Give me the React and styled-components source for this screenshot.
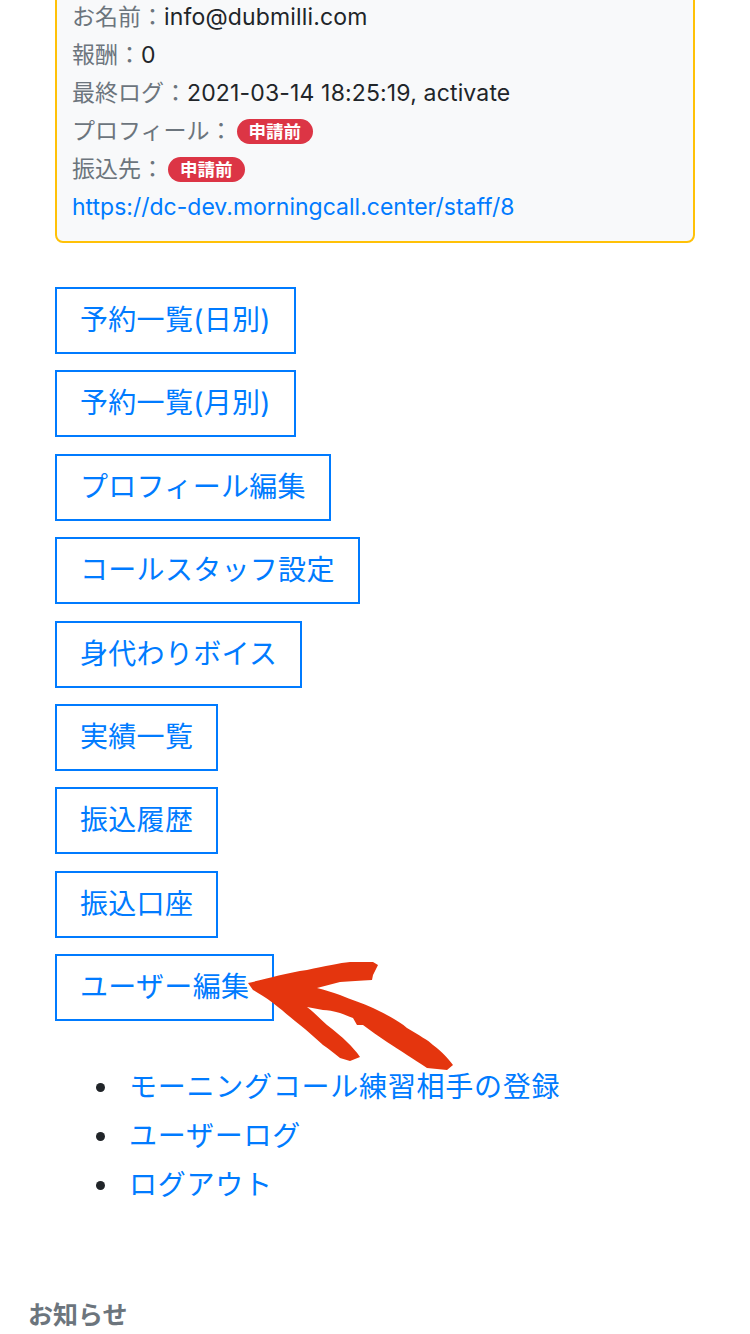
import React from "react";
import styled, { createGlobalStyle } from "styled-components";

const GlobalStyle = createGlobalStyle`
  html, body { margin: 0; padding: 0; background: #ffffff; }
  body {
    font-family: Inter, "Noto Sans CJK JP", sans-serif;
    color: #212529;
  }
`;

const Page = styled.div`
  position: relative;
  display: flow-root;
  width: 750px;
  min-height: 1334px;
  overflow: hidden;
`;

const Section = styled.div`
  padding: 0 55px;
`;

const Card = styled.div`
  margin-top: -19px;
  border: 2px solid #ffc107;
  border-radius: 8px;
  background: #f8f9fa;
  padding: 15px 15px 15px;
`;

const Line = styled.div`
  font-size: 23px;
  line-height: 38px;
  white-space: nowrap;
`;

const Label = styled.span`
  color: #6c757d;
`;

const Value = styled.span`
  color: #212529;
  letter-spacing: 0.15px;
`;

const Link = styled.a`
  color: #007bff;
  text-decoration: none;
`;

const Badge = styled.span`
  display: inline-block;
  margin-left: 4px;
  padding: 4px 12px;
  border-radius: 999px;
  background: #dc3545;
  color: #ffffff;
  font-size: 17.5px;
  font-weight: 700;
  line-height: 17px;
  vertical-align: 1px;
`;

const ButtonList = styled.div`
  margin-top: 44px;
  display: flex;
  flex-direction: column;
  align-items: flex-start;
  gap: 16.4px;
`;

const OutlineButton = styled.a`
  display: inline-block;
  border: 2px solid #007bff;
  color: #007bff;
  font-size: 28px;
  line-height: 39px;
  padding: 12px 23px;
  letter-spacing: 0.3px;
  text-decoration: none;
  white-space: nowrap;
`;

const Menu = styled.ul`
  margin: 42px 0 0;
  padding-left: 66px;
  list-style: disc;
`;

const MenuItem = styled.li`
  padding-left: 8px;
  font-size: 28px;
  line-height: 49px;
  color: #212529;
`;

const MenuLink = styled.a`
  color: #007bff;
  text-decoration: none;
  letter-spacing: 0.75px;
`;

const NoticeTitle = styled.h5`
  margin: 86px 0 0;
  padding-left: 28px;
  font-size: 25px;
  line-height: 38px;
  font-weight: 700;
  color: #6c757d;
`;

const ArrowSvg = styled.svg`
  position: absolute;
  left: 240px;
  top: 955px;
  width: 225px;
  height: 120px;
  pointer-events: none;
`;

const buttons = [
  "予約一覧(日別)",
  "予約一覧(月別)",
  "プロフィール編集",
  "コールスタッフ設定",
  "身代わりボイス",
  "実績一覧",
  "振込履歴",
  "振込口座",
  "ユーザー編集",
];

const links = ["モーニングコール練習相手の登録", "ユーザーログ", "ログアウト"];

function Arrow() {
  return (
    <ArrowSvg viewBox="240 955 225 120" xmlns="http://www.w3.org/2000/svg">
      <path
        fill="#e4350e"
        d="M248,983
           C262,980 285,973 307,970
           C325,966 340,963 350,962
           L373,962 L378,965
           L373,975 L372,980
           C360,981 350,981 340,982
           L317,988
           C325,990 332,992 340,995
           C352,1000 362,1003 373,1008
           C390,1016 400,1022 407,1028
           C420,1036 428,1040 433,1045
           C442,1052 448,1058 453,1065
           L447,1070 L427,1068
           C420,1063 413,1059 407,1055
           C400,1050 393,1046 387,1042
           C378,1036 370,1030 363,1025
           L357,1025 L353,1018
           C348,1016 345,1015 340,1013
           C333,1011 328,1010 323,1010
           L307,1007
           C315,1013 320,1019 327,1025
           C335,1031 342,1037 347,1042
           C352,1047 356,1051 360,1057
           L350,1061 L340,1058
           C334,1053 329,1049 323,1045
           C315,1038 308,1031 300,1025
           C290,1017 282,1010 273,1003
           C265,997 258,993 253,990 Z"
      />
    </ArrowSvg>
  );
}

export default function App() {
  return (
    <>
      <GlobalStyle />
      <Page>
        <Section>
          <Card>
            <Line>
              <Label>お名前：</Label>
              <Value>info@dubmilli.com</Value>
            </Line>
            <Line>
              <Label>報酬：</Label>
              <Value>0</Value>
            </Line>
            <Line>
              <Label>最終ログ：</Label>
              <Value>2021-03-14 18:25:19, activate</Value>
            </Line>
            <Line>
              <Label>プロフィール：</Label>
              <Badge>申請前</Badge>
            </Line>
            <Line>
              <Label>振込先：</Label>
              <Badge>申請前</Badge>
            </Line>
            <Line>
              <Link href="#">https://dc-dev.morningcall.center/staff/8</Link>
            </Line>
          </Card>

          <ButtonList>
            {buttons.map((b) => (
              <OutlineButton key={b} href="#">
                {b}
              </OutlineButton>
            ))}
          </ButtonList>

          <Menu>
            {links.map((l) => (
              <MenuItem key={l}>
                <MenuLink href="#">{l}</MenuLink>
              </MenuItem>
            ))}
          </Menu>
        </Section>

        <NoticeTitle>お知らせ</NoticeTitle>
        <Arrow />
      </Page>
    </>
  );
}
